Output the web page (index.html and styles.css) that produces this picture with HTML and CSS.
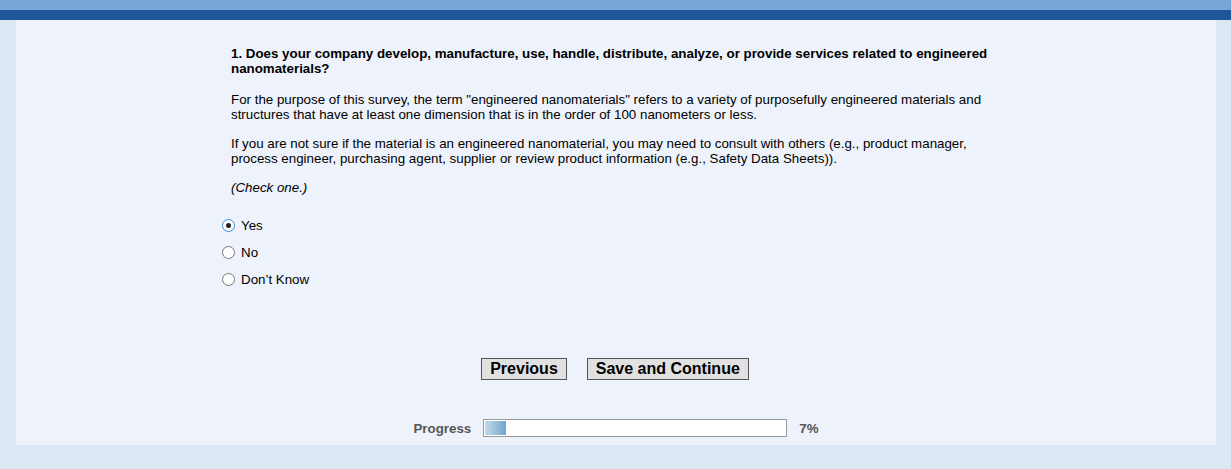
FILE: index.html
```html
<!DOCTYPE html>
<html>
<head>
<meta charset="utf-8">
<link rel="stylesheet" href="styles.css">
</head>
<body>
<div class="bar-light"></div>
<div class="bar-dark"></div>
<div class="panel">
  <div class="question">
    <p class="title">1. Does your company develop, manufacture, use, handle, distribute, analyze, or provide services related to engineered nanomaterials?</p>
    <p>For the purpose of this survey, the term "engineered nanomaterials" refers to a variety of purposefully engineered materials and structures that have at least one dimension that is in the order of 100 nanometers or less.</p>
    <p>If you are not sure if the material is an engineered nanomaterial, you may need to consult with others (e.g., product manager, process engineer, purchasing agent, supplier or review product information (e.g., Safety Data Sheets)).</p>
    <p class="hint">(Check one.)</p>
    <div class="options">
      <label class="option"><span class="radio checked"></span>Yes</label>
      <label class="option"><span class="radio"></span>No</label>
      <label class="option"><span class="radio"></span>Don’t Know</label>
    </div>
  </div>
  <div class="buttons">
    <button class="btn">Previous</button>
    <button class="btn">Save and Continue</button>
  </div>
  <div class="progress">
    <span class="plabel">Progress</span>
    <div class="track"><div class="fill" style="width:7%"></div></div>
    <span class="pct">7%</span>
  </div>
</div>
</body>
</html>
```

FILE: styles.css
```css
html, body {
  margin: 0;
  padding: 0;
}
body {
  background: #dbe8f4;
  font-family: Arial, "Liberation Sans", sans-serif;
  font-size: 13.33px;
  color: #000;
  height: 469px;
  overflow: hidden;
}
.bar-light {
  height: 10px;
  background: #76a7d7;
}
.bar-dark {
  height: 10px;
  background: #1e5799;
}
.panel {
  margin: 0 15px 0 16px;
  height: 425px;
  background: #eef3fb;
  box-sizing: border-box;
  padding-top: 26px;
}
.question {
  margin-left: 215px;
  width: 765px;
}
.question p {
  margin: 0 0 14px 0;
  line-height: 15px;
}
.question .title {
  font-weight: bold;
  margin-bottom: 16px;
}
.question .hint {
  font-style: italic;
}
.options {
  display: flex;
  flex-direction: column;
  gap: 12px;
  margin-top: 23px;
  margin-left: -9px;
}
.option {
  display: flex;
  align-items: center;
  height: 15px;
  gap: 6px;
}
.radio {
  width: 11px;
  height: 11px;
  border: 1px solid #767676;
  border-radius: 50%;
  background: #fff;
  position: relative;
  box-sizing: content-box;
}
.radio.checked {
  border-color: #2f8fe0;
}
.radio.checked::after {
  content: "";
  position: absolute;
  left: 3px;
  top: 3px;
  width: 5px;
  height: 5px;
  border-radius: 50%;
  background: #222;
}
.buttons {
  display: flex;
  justify-content: center;
  gap: 20px;
  margin-top: 71px;
  margin-left: -2px;
}
.btn {
  font-family: Arial, "Liberation Sans", sans-serif;
  font-size: 16px;
  font-weight: bold;
  color: #000;
  background: #e1e1e1;
  border: 1px solid #555;
  padding: 0 8px;
  height: 22px;
  line-height: 20px;
  border-radius: 0;
}
.progress {
  display: flex;
  align-items: center;
  justify-content: center;
  margin-top: 39px;
  font-weight: bold;
  color: #555;
  font-size: 13.33px;
}
.plabel {
  margin-right: 12px;
}
.track {
  width: 300px;
  height: 14px;
  border: 1px solid #999;
  padding: 1px;
  background: #fff;
}
.fill {
  height: 100%;
  background: linear-gradient(to right, #c3dbea, #6ea7cb);
}
.pct {
  margin-left: 12px;
}
```
